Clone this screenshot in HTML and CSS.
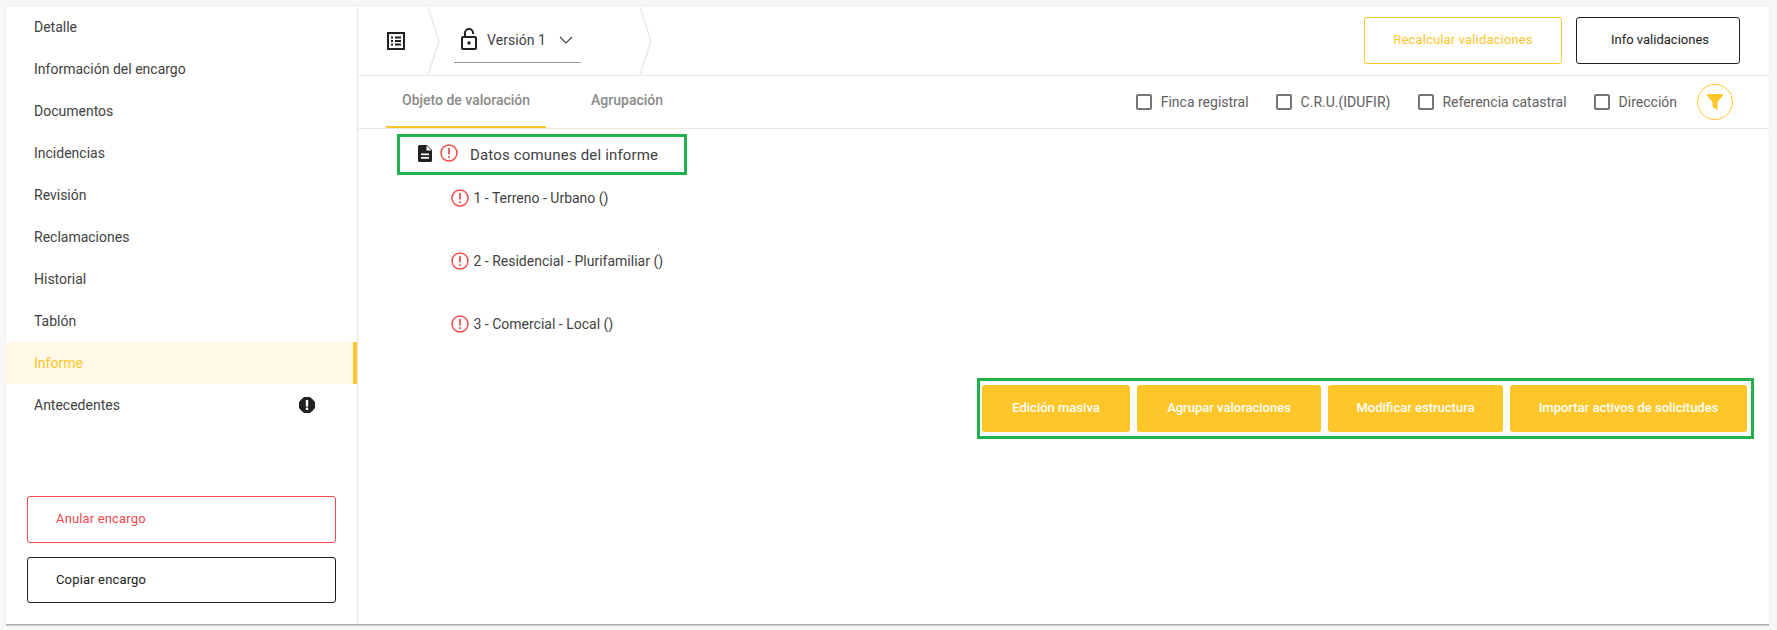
FILE: index.html
```html
<!DOCTYPE html>
<html lang="es">
<head>
<meta charset="utf-8">
<title>Informe</title>
<link rel="stylesheet" href="styles.css">
</head>
<body>
<div class="card">
  <aside class="sidebar">
    <nav class="menu">
      <a class="menu-item">Detalle</a>
      <a class="menu-item">Información del encargo</a>
      <a class="menu-item">Documentos</a>
      <a class="menu-item">Incidencias</a>
      <a class="menu-item">Revisión</a>
      <a class="menu-item">Reclamaciones</a>
      <a class="menu-item">Historial</a>
      <a class="menu-item">Tablón</a>
      <a class="menu-item active">Informe</a>
      <a class="menu-item">Antecedentes
        <svg class="badge" viewBox="0 0 16 16"><path d="M5 0h6l5 5v6l-5 5H5l-5-5V5z" fill="#212121"/><circle cx="8" cy="8" r="7.800" fill="#212121"/><rect x="6.800" y="3" width="2.400" height="6.600" fill="#fff"/><rect x="6.800" y="10.600" width="2.400" height="2.400" fill="#fff"/></svg>
      </a>
    </nav>
    <div class="side-actions">
      <button class="side-btn danger">Anular encargo</button>
      <button class="side-btn dark">Copiar encargo</button>
    </div>
  </aside>
  <main class="main">
    <header class="topbar">
      <svg class="list-icon" viewBox="0 0 18 18" fill="none"><rect x="1" y="1" width="16" height="16" stroke="#212121" stroke-width="2"/><path d="M4 5.500h2M8 5.500h6M4 9h2M8 9h6M4 12.500h2M8 12.500h6" stroke="#212121" stroke-width="2"/></svg>
      <svg class="crumb first" viewBox="0 0 13 68" fill="none"><path d="M1 0 L12 34 L1 68" stroke="#e8e8ee" stroke-width="1.500"/></svg>
      <div class="version">
        <svg class="lock" viewBox="0 0 16 22" fill="none"><rect x="1" y="9" width="14" height="12" rx="1" stroke="#212121" stroke-width="2"/><path d="M4 9V5a4 4 0 0 1 8 0v1" stroke="#212121" stroke-width="2"/><circle cx="8" cy="15" r="1.700" fill="#212121"/></svg>
        <span class="version-label">Versión 1</span>
        <svg class="caret" viewBox="0 0 14 8" fill="none"><path d="M1 1l6 6 6-6" stroke="#424242" stroke-width="1.100"/></svg>
      </div>
      <svg class="crumb" viewBox="0 0 13 68" fill="none"><path d="M1 0 L12 34 L1 68" stroke="#e8e8ee" stroke-width="1.500"/></svg>
      <div class="top-actions">
        <button class="top-btn recalc">Recalcular validaciones</button>
        <button class="top-btn info">Info validaciones</button>
      </div>
    </header>
    <div class="tabbar">
      <div class="tabs">
        <a class="tab selected">Objeto de valoración</a>
        <a class="tab">Agrupación</a>
      </div>
      <div class="filters">
        <label class="check"><span class="box"></span>Finca registral</label>
        <label class="check"><span class="box"></span>C.R.U.(IDUFIR)</label>
        <label class="check"><span class="box"></span>Referencia catastral</label>
        <label class="check"><span class="box"></span>Dirección</label>
        <span class="filter-btn">
          <svg viewBox="0 0 16 16"><path d="M0 0h16v1.500L10.500 8V16L5.500 13V8L0 1.500z" fill="#fec629"/></svg>
        </span>
      </div>
    </div>
    <section class="content">
      <div class="common">
        <svg class="doc" viewBox="0 0 14 17"><path d="M1.500 0H9l5 5v10.500a1.500 1.500 0 0 1-1.500 1.500h-11A1.500 1.500 0 0 1 0 15.500v-14A1.500 1.500 0 0 1 1.500 0z" fill="#212121"/><path d="M8.500 0.500V5.500H13.500" fill="#fff"/><rect x="3" y="8.500" width="8" height="1.700" fill="#fff"/><rect x="3" y="12" width="8" height="1.700" fill="#fff"/></svg>
        <svg class="alert" viewBox="0 0 18 18" fill="none"><circle cx="9" cy="9" r="8" stroke="#f44a4a" stroke-width="1.500"/><path d="M9 4v6.500M9 12.300v1.700" stroke="#f44a4a" stroke-width="1.700"/></svg>
        <span class="common-label">Datos comunes del informe</span>
      </div>
      <ul class="assets">
        <li class="asset"><svg class="alert" viewBox="0 0 18 18" fill="none"><circle cx="9" cy="9" r="8" stroke="#f44a4a" stroke-width="1.500"/><path d="M9 4v6.500M9 12.300v1.700" stroke="#f44a4a" stroke-width="1.700"/></svg>1 - Terreno - Urbano ()</li>
        <li class="asset"><svg class="alert" viewBox="0 0 18 18" fill="none"><circle cx="9" cy="9" r="8" stroke="#f44a4a" stroke-width="1.500"/><path d="M9 4v6.500M9 12.300v1.700" stroke="#f44a4a" stroke-width="1.700"/></svg>2 - Residencial - Plurifamiliar ()</li>
        <li class="asset"><svg class="alert" viewBox="0 0 18 18" fill="none"><circle cx="9" cy="9" r="8" stroke="#f44a4a" stroke-width="1.500"/><path d="M9 4v6.500M9 12.300v1.700" stroke="#f44a4a" stroke-width="1.700"/></svg>3 - Comercial - Local ()</li>
      </ul>
      <div class="bulk">
        <button class="bulk-btn b1">Edición masiva</button>
        <button class="bulk-btn b2">Agrupar valoraciones</button>
        <button class="bulk-btn b3">Modificar estructura</button>
        <button class="bulk-btn b4">Importar activos de solicitudes</button>
      </div>
    </section>
  </main>
</div>
</body>
</html>
```
FILE: styles.css
```css
* { box-sizing: border-box; }
html, body { margin: 0; height: 100%; }
body {
  background: #f7f7f7;
  font-family: Roboto, "Liberation Sans", sans-serif;
  color: #424242;
  font-size: 14px;
  padding: 5px 8px 5px 6px;
  overflow: hidden;
}
button { font-family: inherit; cursor: pointer; }
.card {
  display: flex;
  height: 620px;
  background: #fff;
  border-top: 1px solid #eaeaea;
  border-bottom: 1px solid #aaa;
  box-shadow: 0 1px 1px rgba(0,0,0,.15);
}
.sidebar {
  width: 352px;
  flex: none;
  border-right: 1px solid #e8e8e8;
  display: flex;
  flex-direction: column;
  justify-content: space-between;
}
.menu { display: flex; flex-direction: column; }
.menu-item {
  height: 42px;
  display: flex;
  align-items: center;
  justify-content: space-between;
  padding: 0 42px 0 28px;
}
.menu-item.active {
  background: #fff8e7;
  color: #fec629;
  border-right: 4px solid #fec629;
}
.badge { width: 16px; height: 16px; }
.side-actions {
  display: flex;
  flex-direction: column;
  gap: 14px;
  padding: 0 21px 21px 21px;
}
.side-btn {
  height: 46px;
  background: #fff;
  border-radius: 3px;
  text-align: left;
  padding: 0 0 2px 28px;
  font-size: 13px;
  letter-spacing: .15px;
}
.side-btn.danger { border: 1px solid #f44a4a; color: #f44a4a; height: 47px; }
.side-btn.dark { border: 1px solid #212121; color: #212121; }
.main { flex: 1; display: flex; flex-direction: column; min-width: 0; }
.topbar {
  height: 70px;
  flex: none;
  display: flex;
  align-items: center;
  border-bottom: 1px solid #e8e8e8;
  padding-left: 29px;
  padding-right: 29px;
}
.list-icon { width: 18px; height: 18px; flex: none; margin-right: 22px; }
.crumb { width: 13px; height: 68px; flex: none; }
.version {
  width: 127px;
  height: 44px;
  margin: 1px 0 0 14px;
  padding: 0 0 2px 7px;
  display: flex;
  align-items: center;
  border-bottom: 1px solid #999;
}
.lock { width: 16px; height: 22px; flex: none; margin-right: 10px; margin-top: -2px; }
.version-label { font-size: 14px; letter-spacing: .05px; }
.caret { width: 14px; height: 8px; margin-left: 13px; }
.version + .crumb { margin-left: 58px; }
.top-actions { margin-left: auto; display: flex; gap: 14px; }
.top-btn {
  height: 47px;
  background: #fff;
  border-radius: 3px;
  font-size: 13px;
  font-weight: 400;
  padding-bottom: 3px;
}
.recalc { width: 198px; border: 1px solid #fec629; color: #fec629; letter-spacing: .15px; }
.info { width: 164px; border: 1px solid #212121; color: #212121; padding-left: 10px; }
.tabbar {
  height: 53px;
  flex: none;
  display: flex;
  align-items: stretch;
  justify-content: space-between;
  border-bottom: 1px solid #e8e8e8;
  padding-left: 28px;
  padding-right: 36px;
}
.tabs { display: flex; gap: 0; }
.tab {
  padding: 0 16px 2px;
  height: 52px;
  display: flex;
  align-items: center;
  font-weight: 500;
  font-size: 14px;
  color: #8a8a8a;
  border-bottom: 2px solid transparent;
  margin-right: 29px;
}
.tab.selected { border-bottom-color: #fec629; }
.filters { display: flex; align-items: center; gap: 27.5px; }
.check { display: flex; align-items: center; gap: 8.5px; font-size: 14px; color: #616161; }
.box { width: 16px; height: 16px; border: 2px solid #757575; border-radius: 2px; flex: none; }
.filter-btn {
  width: 36px;
  height: 36px;
  border: 1px solid #fec629;
  border-radius: 50%;
  display: flex;
  align-items: center;
  justify-content: center;
  margin-left: -7.5px;
}
.filter-btn svg { width: 16px; height: 16px; }
.content { flex: 1; padding: 5px 15px 0 39px; display: flex; flex-direction: column; }
.common {
  width: 290px;
  height: 41px;
  border: 3px solid #22b04c;
  display: flex;
  align-items: center;
  padding-left: 18px;
}
.doc { width: 14px; height: 17px; flex: none; margin-right: 8px; margin-top: -3px; }
.alert { width: 18px; height: 18px; flex: none; }
.common .alert { margin-top: -3px; }
.common-label { margin-left: 12px; font-size: 15px; color: #424242; letter-spacing: .17px; }
.assets { list-style: none; margin: 0; padding: 0 0 0 54px; }
.asset { height: 63px; display: flex; align-items: center; gap: 4.5px; }
.asset:first-child { margin-top: -9px; }
.bulk {
  align-self: flex-end;
  width: 777px;
  height: 61px;
  margin-top: 23px;
  border: 3px solid #22b04c;
  display: flex;
  align-items: center;
  gap: 7px;
  padding-left: 2px;
}
.bulk-btn {
  height: 47px;
  border: 0;
  border-radius: 3px;
  background: #fec629;
  color: #fff;
  font-size: 13px;
  font-weight: 500;
  padding-bottom: 4px;
}
.b1 { width: 148px; }
.b2 { width: 184px; }
.b3 { width: 175px; }
.b4 { width: 237px; }
```
